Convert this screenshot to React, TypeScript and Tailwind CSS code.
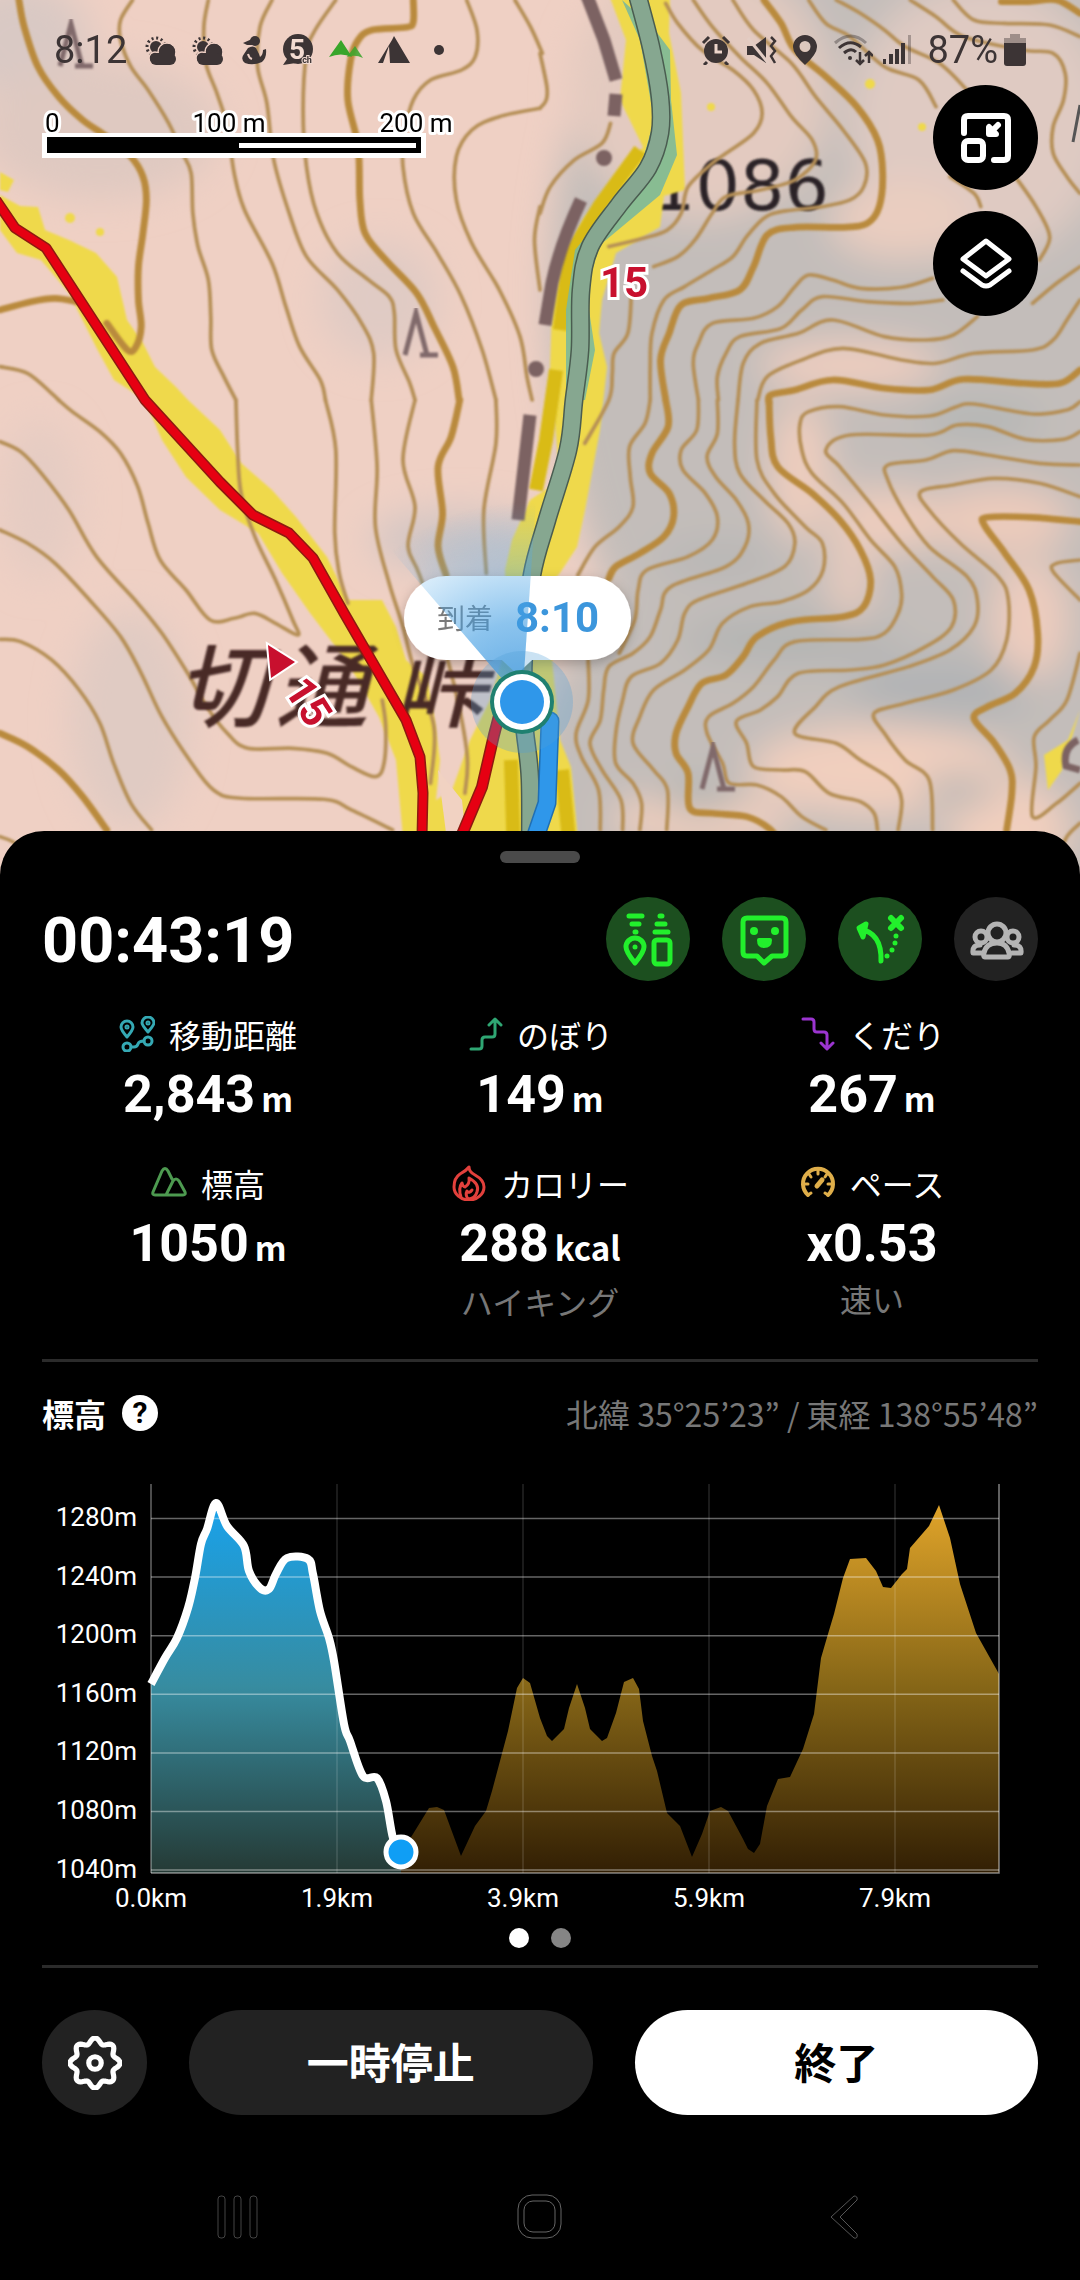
import React from "react";

type Point = [number, number];
type Contour = { d: string; major?: boolean };

const JP = "font-['Noto_Sans_CJK_JP',sans-serif]";
const NUM = "font-[Roboto,'Noto_Sans_CJK_JP',sans-serif]";

// "x,y x,y ..." -> list of points
const parse = (s: string): Point[] => s.split(" ").map((p) => p.split(",").map(Number) as Point);

// Catmull-Rom spline through the points
function smooth(s: string) {
    const p = parse(s);
    let d = `M${p[0][0]} ${p[0][1]}`;
    for (let i = 0; i < p.length - 1; i++) {
        const a = p[Math.max(i - 1, 0)];
        const b = p[i];
        const c = p[i + 1];
        const e = p[Math.min(i + 2, p.length - 1)];
        d += ` C${b[0] + (c[0] - a[0]) / 6} ${b[1] + (c[1] - a[1]) / 6} ${c[0] - (e[0] - b[0]) / 6} ${c[1] - (e[1] - b[1]) / 6} ${c[0]} ${c[1]}`;
    }
    return d;
}

// Contour lines, one group per map tile
const TILES: { x: number; y: number; contours: Contour[] }[] = [
    {
        x: 0,
        y: 0,
        contours: [
            { major: true, d: "55,0 70,80 110,200 170,290 240,360 310,410 380,470 415,530 425,600 415,700 402,800 402,900 410,980 395,1040 370,1050 310,970" },
            { d: "385,0 350,60 350,120 380,200 430,270 490,370 530,460 555,520 560,640 575,740 605,840 612,950 615,1050 650,1130 685,1200" },
            { d: "605,0 592,80 598,190 630,280 660,380 680,520 710,630 790,790 830,920 870,1040 930,1140 945,1200" },
            { d: "790,0 755,80 748,200 775,310 795,480 840,640 890,770 980,870 1050,970 1085,1060 1078,1200" },
            { d: "975,0 915,90 890,160 880,330 890,500 920,640 980,760 1070,840 1130,890 1145,940 1150,1050 1190,1150 1205,1200" },
            { major: true, d: "1200,0 1200,65 1180,82 1080,90 1040,120 1018,180 1010,300 1040,440 1045,600 1060,700 1120,780 1210,880 1260,980 1315,1100 1333,1200" },
            { d: "1355,0 1385,90 1380,170 1340,210 1250,240 1200,300 1175,400 1170,500 1200,640 1270,760 1340,890 1400,1050 1440,1200" },
            { d: "1495,0 1540,80 1575,160" },
            { d: "1568,325 1450,350 1370,390 1325,470 1325,600 1370,730 1450,870 1510,1010 1530,1130 1545,1200" },
            { d: "1568,620 1552,720 1568,870" },
            { major: true, d: "0,930 90,905 160,895 220,905" },
            { d: "0,1100 80,1120 150,1180 170,1200" },
        ],
    },
    {
        x: 540,
        y: 0,
        contours: [
            { d: "0,160 20,260 18,300 0,325" },
            { d: "0,640 30,560 100,480 180,430 205,370" },
            { d: "365,10 400,70 470,150 560,210 620,270 645,340 620,400 540,460 500,490 430,560 410,640 370,690 300,715 200,740" },
            { d: "445,0 500,80 580,170 660,250 730,350 790,420 800,480 740,540 640,570 540,590 500,640 450,720 400,770 330,800" },
            { d: "560,0 620,90 730,190 800,290 880,390 945,490 940,560 900,600 820,620 700,635 650,655 600,710 560,770 500,810 420,860 360,900 325,1000 320,1100 320,1200" },
            { major: true, d: "650,0 700,70 740,150 830,230 920,320 980,420 995,520 985,620 950,670 880,682 740,682 660,705 620,800 580,870 490,895 410,915 375,1000 350,1080 365,1200" },
            { d: "780,0 830,70 900,110 1000,200 1100,240 1150,320" },
            { d: "860,0 930,40 1000,90 1060,140 1160,190 1240,270" },
            { d: "1075,0 1150,50 1230,110 1400,150 1490,160 1525,220 1520,300 1490,380 1490,460 1530,530 1568,580" },
            { d: "1200,0 1260,60 1350,70 1480,75 1568,110" },
            { major: true, d: "1340,5 1420,5 1500,0 1568,40" },
            { d: "1380,530 1440,620 1480,710 1450,780" },
            { d: "1190,530 1260,580 1280,620" },
            { d: "1140,835 1050,862 930,865 850,840 780,825 740,860 690,920 620,955 500,970 460,1030 445,1090 460,1200" },
            { d: "1170,900 1080,910 950,905 820,890 760,930 700,985 580,1010 540,1060 515,1130 518,1200" },
            { d: "1270,950 1200,1005 1120,1020 1000,1010 850,960 750,1000 640,1030 590,1090 575,1200" },
            { d: "1568,900 1530,960 1490,1020 1430,1050 1260,1060 1150,1090 1050,1080 880,1045 760,1080 660,1130 632,1200" },
            { d: "1568,800 1500,850 1430,910" },
            { major: true, d: "1568,1110 1510,1150 1400,1150 1230,1138 1130,1170 1000,1165 850,1140 740,1170 670,1185 665,1210" },
            { d: "265,890 255,1000 215,1060 210,1120 200,1200 130,1330" },
        ],
    },
    {
        x: 0,
        y: 400,
        contours: [
            { d: "170,0 210,35 290,95 350,160 400,260 430,370 465,480 540,570 610,660 680,655 740,640 800,670 865,705 850,660 800,540 740,410 700,280 690,150 685,0" },
            { d: "0,125 60,155 120,220 200,330 280,470 400,610 470,700 545,820 600,920 660,1000 720,1045 850,1045 950,1060 1020,1100 1090,1130 1115,1090 1120,980 1110,900" },
            { d: "0,390 80,430 160,490 260,600 350,710 410,820 470,950 550,1080 620,1170 700,1195 940,1198 1020,1230 1140,1290" },
            { d: "0,718 60,725 150,780 230,870 290,970 330,1090 380,1210 440,1290" },
            { major: true, d: "0,1000 80,1040 170,1110 240,1190 310,1290" },
            { d: "0,1310 50,1335 80,1400" },
            { d: "945,0 975,150 972,400 985,520 1010,610" },
            { d: "1078,0 1095,200 1090,380 1130,550 1170,680 1200,800 1260,980 1250,1150" },
            { d: "1205,0 1170,180 1205,320 1185,440 1220,530 1300,780 1355,1050 1350,1180" },
            { major: true, d: "1335,0 1310,110 1272,200 1285,340 1272,440 1295,525" },
            { d: "1440,0 1440,130 1405,330 1412,520" },
        ],
    },
    {
        x: 540,
        y: 400,
        contours: [
            { d: "320,0 305,70 260,140 262,230 270,320 230,380 160,440 110,525" },
            { major: true, d: "365,0 372,80 325,160 320,220 375,280 388,350 360,410 290,460 220,500 200,535" },
            { d: "460,0 455,90 410,150 415,210 480,280 515,350 500,420 430,470 310,510 285,570 275,660 230,760" },
            { d: "515,0 515,100 485,170 510,230 570,300 605,370 595,440 540,500 380,560 350,630 320,710 270,760 200,800 185,870 175,960 145,1030 180,1110 235,1200 240,1290" },
            { d: "575,0 565,130 580,220 650,300 720,370 740,430 710,500 600,550 460,600 420,640 400,720 350,790 265,830 240,900 220,1000 220,1090 270,1150 295,1210 290,1290" },
            { d: "630,0 630,180 680,280 770,380 820,430 822,510 780,570 700,605 610,620 530,670 490,750 420,810 330,870 290,950 270,1030 330,1110 370,1170 368,1290" },
            { major: true, d: "665,0 670,110 690,200 790,280 870,360 930,450 960,540 940,620 880,650 730,665 630,710 590,770 540,825 470,850 430,920 395,1000 395,1060 430,1120 435,1225 500,1240 600,1250 665,1285 700,1330" },
            { d: "1568,5 1530,30 1430,42 1260,12 1210,20 1130,48 1000,45 870,20 780,35 755,70 760,150 790,220 880,310 960,420 1030,500 1050,580 1040,640 1000,700 930,718 740,725 680,780 620,860 560,910 490,950 485,1000 530,1090 550,1150 630,1155 700,1190 760,1250 830,1290" },
            { d: "1568,95 1520,118 1410,118 1300,80 1210,75 1130,105 900,105 830,150 870,200 950,300 1050,430 1140,530 1200,600 1195,680 1120,740 1000,795 900,810 750,820 690,890 640,930 570,965 600,1030 620,1100 700,1110 770,1115 840,1180 930,1205 970,1240 980,1290" },
            { d: "1568,195 1450,190 1300,165 1200,152 1120,180 1010,195 1010,240 1060,340 1130,440 1240,530 1270,600 1260,680 1190,750 1070,800 870,860 800,920 740,1000 860,1030 930,1080 1020,1140 1050,1200 1040,1290" },
            { d: "1568,290 1450,250 1320,235 1200,255 1105,275 1130,330 1220,430 1330,530 1360,600 1355,720 1310,810 1200,870 1060,910 970,940 1000,1000 1060,1080 1130,1140 1140,1290" },
            { major: true, d: "1568,365 1430,352 1300,352 1290,375 1350,460 1420,570 1445,700 1435,800 1380,880 1300,920 1260,955 1320,1030 1365,1110 1370,1180 1355,1290" },
            { d: "1568,480 1500,490 1490,515 1568,600" },
            { d: "1568,760 1530,900 1480,960 1435,1010 1440,1100 1430,1250 1500,1210 1568,1150" },
            { d: "1568,1270 1530,1310 1500,1380" },
            { d: "140,780 140,900 105,1000 120,1070 170,1170 175,1290" },
        ],
    },
];

// Light and dark patches of the hill shading: cx, cy, rx, ry, colour
const SHADES: [number, number, number, number, string][] = [
    [950, 300, 400, 560, "#c3bdba"],
    [830, 800, 300, 300, "#c3bdba"],
    [700, 90, 130, 130, "#e3cac0"],
    [980, 120, 130, 140, "#dfcac2"],
    [900, 220, 70, 40, "#eacdc0"],
    [850, 365, 90, 24, "#efcebf"],
    [800, 470, 30, 70, "#eecdbd"],
    [890, 520, 60, 30, "#efcdbd"],
    [850, 560, 20, 80, "#e8cbbd"],
    [1000, 520, 70, 35, "#eccbbb"],
    [1030, 620, 40, 60, "#edccbd"],
    [880, 770, 130, 45, "#f1cfbe"],
    [700, 820, 90, 26, "#f1cfbe"],
    [1010, 830, 60, 50, "#f1cfbe"],
    [790, 640, 110, 24, "#b3b4b3"],
    [940, 690, 90, 34, "#b2b4b5"],
    [720, 560, 60, 18, "#b7b6b5"],
    [980, 420, 60, 14, "#aeb3b2"],
    [700, 800, 40, 12, "#aab0ae"],
    [960, 790, 40, 14, "#b2b4b3"],
    [20, 40, 70, 60, "#d9c9c4"],
    [100, 130, 120, 70, "#dfc9c1"],
    [380, 300, 60, 60, "#e0cbc4"],
    [130, 720, 60, 110, "#e0cbc3"],
    [460, 540, 90, 30, "#d2c6c4"],
    [40, 500, 40, 80, "#e5ccc3"],
];

const ROUTE = "636,-10 651,47 660,97 660,133 648,168 619,205 590,247 581,290 580,350 574,400 568,450 547,520 532,575 524,650 524,720 530,780 530,880";
const RED_PATH = "M-4 200 L15 228 L46 248 L145 400 L220 482 L253 515 L289 533 L313 558 L344 613 L406 720 L420 757 L423 793 L421 880";

function TreeMark({ x, y }: { x: number; y: number }) {
    return (
        <path
            transform={`translate(${x} ${y})`}
            d="M2 44 L13 2 L24 44 M17 44 H35"
            fill="none"
            stroke="#80696a"
            strokeWidth="5"
            filter="url(#soft)"
        />
    );
}

function TrailMap() {
    return (
        <svg viewBox="0 0 1080 880" preserveAspectRatio="xMidYMin slice" className="block h-full w-full" aria-label="登山地図">
            <defs>
                <filter id="shade" x="-50%" y="-50%" width="200%" height="200%">
                    <feGaussianBlur stdDeviation="18" />
                </filter>
                <filter id="soft">
                    <feGaussianBlur stdDeviation="1" />
                </filter>
                <filter id="pillShadow" x="-20%" y="-30%" width="140%" height="180%">
                    <feDropShadow dx="0" dy="4" stdDeviation="6" floodOpacity="0.25" />
                </filter>
                <radialGradient id="beam" gradientUnits="userSpaceOnUse" cx="522" cy="702" r="200">
                    <stop offset="0" stopColor="#2f8fdc" stopOpacity="0.8" />
                    <stop offset="0.4" stopColor="#3f9ce2" stopOpacity="0.6" />
                    <stop offset="0.75" stopColor="#5aaeea" stopOpacity="0.26" />
                    <stop offset="1" stopColor="#5aaeea" stopOpacity="0" />
                </radialGradient>
            </defs>

            <rect width="1080" height="880" fill="#efd0c4" />
            <g filter="url(#shade)">
                {SHADES.map(([cx, cy, rx, ry, fill], i) => (
                    <ellipse key={i} cx={cx} cy={cy} rx={rx} ry={ry} fill={fill} />
                ))}
            </g>

            {/* Place names */}
            <g filter="url(#soft)" fill="#2a2426">
                <text x="829" y="210" fontSize="70" textAnchor="end" fontFamily="DejaVu Sans, sans-serif">1086</text>
            </g>

            {/* Highlight along the trails */}
            <g fill="#efd94c" filter="url(#soft)">
                <path d="M0 172 L14 180 L8 192 L0 190 Z" />
                <path d="M0 195 L20 206 L38 207 L45 230 L69 240 L96 253 L117 277 L127 320 L143 343 L155 367 L176 387 L188 400 L220 430 L241 463 L272 490 L296 517 L327 557 L348 600 L382 600 L396 627 L406 660 L427 677 L434 717 L440 760 L436 800 L452 790 L470 740 L490 700 L508 640 L505 570 L512 540 L530 500 L560 480 L550 370 L552 310 L562 262 L585 217 L609 193 L643 147 L620 100 L626 40 L609 -5 L670 -5 L669 33 L681 93 L685 190 L664 196 L660 227 L616 253 L602 300 L599 333 L607 367 L600 430 L585 510 L577 547 L560 573 L545 590 L560 740 L571 767 L580 860 L405 860 L396 760 L379 717 L348 663 L310 613 L282 573 L258 533 L220 510 L186 477 L162 440 L145 400 L114 380 L96 347 L69 293 L41 260 L17 253 L0 230 Z" />
                <path d="M1080 710 L1062 770 L1048 790 L1044 755 L1068 740 Z" />
                <circle cx="100" cy="232" r="4" />
                <circle cx="70" cy="218" r="5" />
                <circle cx="870" cy="84" r="5" />
                <circle cx="922" cy="127" r="4" />
                <circle cx="711" cy="107" r="4" />
            </g>
            <path d="M438 770 L452 880 L470 880 L462 800 Z" fill="#f1d2c2" />
            <g fill="none" stroke="#d9bb16" strokeWidth="14" filter="url(#soft)">
                <path d="M640 150 L600 205 L570 255 L560 330" />
                <path d="M556 370 L546 440 L536 490" />
                <path d="M511 760 L514 860 M562 770 L570 850" />
            </g>

            {/* Contour lines */}
            <g fill="none" strokeLinecap="round" filter="url(#soft)">
                {TILES.map((tile) => (
                    <g key={`${tile.x}-${tile.y}`} transform={`translate(${tile.x} ${tile.y}) scale(0.3444 0.3333)`}>
                        {tile.contours.map((c) => (
                            <path
                                key={c.d}
                                d={smooth(c.d)}
                                stroke={c.major ? "#b98a3c" : "#b58f56"}
                                strokeWidth={c.major ? 20 : 11}
                            />
                        ))}
                    </g>
                ))}
            </g>

            {/* Prefecture border */}
            <g fill="none" stroke="#7b6262" strokeWidth="13" filter="url(#soft)">
                <path d="M587 -4 L604 40 L616 80 M616 94 L614 116 M581 200 Q560 245 552 283 L545 325 M530 415 L518 520" />
                <path d="M1078 740 Q1062 748 1066 766 L1080 770" strokeWidth="7" />
                <circle cx="604" cy="158" r="8" fill="#7b6262" stroke="none" />
                <circle cx="536" cy="369" r="8" fill="#7b6262" stroke="none" />
            </g>
            <TreeMark x={403} y={311} />
            <TreeMark x={58} y={22} />
            <TreeMark x={700} y={745} />
            <path d="M1080 105 L1073 142" stroke="#555" strokeWidth="3" />

            <g filter="url(#soft)" fill="#4a2c28" fontFamily="Noto Sans CJK JP, sans-serif" fontStyle="italic" fontWeight="500" fontSize="92">
                <text x="176" y="720">切</text>
                <text x="276" y="720">通</text>
                <text x="394" y="720">峠</text>
            </g>

            {/* Trails */}
            <path d={RED_PATH} fill="none" stroke="#8d1a10" strokeWidth="11" strokeLinejoin="round" />
            <path d={RED_PATH} fill="none" stroke="#e60012" strokeWidth="8" strokeLinejoin="round" />
            <path d="M500 712 L494 735 L482 787 L463 832 L440 880" fill="none" stroke="#8d1a10" strokeWidth="12" />
            <path d="M500 712 L494 735 L482 787 L463 832 L440 880" fill="none" stroke="#e60012" strokeWidth="9" />

            <path d="M622 0 L655 30 L670 50 L671 100 L677 155 L660 195 L600 245 L586 290 L595 350 L585 400 L566 400 L566 310 L575 250 L640 170 L654 120 L640 40 Z" fill="#7cb89a" opacity="0.9" />
            <path d={smooth(ROUTE)} fill="none" stroke="#4a5c50" strokeWidth="19" />
            <path d={smooth(ROUTE)} fill="none" stroke="#86a790" strokeWidth="16" />
            <path d="M550 721 L547 803 L524 870" fill="none" stroke="#1f6fb4" strokeWidth="19" strokeLinecap="round" strokeLinejoin="round" />
            <path d="M550 721 L547 803 L524 870" fill="none" stroke="#2f97ea" strokeWidth="16" strokeLinecap="round" strokeLinejoin="round" />

            <g fill="#c8102e" stroke="#fff" strokeWidth="6" paintOrder="stroke" fontFamily="Roboto, sans-serif" fontWeight="700" fontSize="42">
                <text x="600" y="297">15</text>
                <text x="308" y="716" textAnchor="middle" transform="rotate(57 308 702)">15</text>
                <path d="M268 645 L295 662 L271 678 Z" strokeWidth="4" />
            </g>

            {/* Arrival bubble */}
            <g filter="url(#pillShadow)">
                <rect x="404" y="576" width="227" height="84" rx="42" fill="#fff" />
                <path d="M502 660 L517 674 L532 660 Z" fill="#fff" />
            </g>
            <text x="437" y="629" fontSize="28" fill="#7a7a7a" fontFamily="Noto Sans CJK JP, sans-serif">到着</text>
            <text x="515" y="632" fontSize="42" fontWeight="700" fill="#3c96dc" fontFamily="Roboto, sans-serif">8:10</text>

            {/* Current position and heading */}
            <path d="M522 702 L374 530 Q450 470 536 500 Z" fill="url(#beam)" />
            <circle cx="522" cy="702" r="51" fill="#4f9fd6" opacity="0.3" />
            <circle cx="522" cy="702" r="32" fill="#1f8070" />
            <circle cx="522" cy="702" r="28" fill="#fff" />
            <circle cx="522" cy="702" r="22" fill="#2f97ea" />
        </svg>
    );
}

function WeatherIcon() {
    return (
        <svg viewBox="0 0 32 30" className="h-[30px] w-8" fill="#3c3435">
            <circle cx="11" cy="12" r="9" fill="none" stroke="#3c3435" strokeWidth="3" strokeDasharray="2 2.7" />
            <circle cx="11" cy="12" r="6" />
            <g stroke="#edcfc4" strokeWidth="1.5">
                <circle cx="22" cy="17" r="9" />
                <circle cx="10" cy="23" r="6" />
            </g>
            <circle cx="22" cy="17" r="8" />
            <rect x="5" y="18" width="26" height="12" rx="6" />
        </svg>
    );
}

function StatusBar() {
    return (
        <div className={`flex h-[100px] items-center justify-between px-[54px] text-[38px] leading-none text-[#3c3435] ${NUM}`}>
            <div className="flex items-center gap-[15px]">
                <span className="mr-[3px]">8:12</span>
                <WeatherIcon />
                <WeatherIcon />
                <svg viewBox="0 0 28 30" className="h-[30px] w-7" fill="#3c3435">
                    <circle cx="16" cy="6" r="5" />
                    <path d="M4 8 L13 4 L15 10 L8 10 Z" />
                    <path d="M9 13 Q14 10 17 13 L20 19 L21 22 Q24 20 24 15 L27 14 Q28 23 23 27 Q14 31 6 28 Q1 24 5 19 Z" />
                    <path d="M9 19 Q10 23 13 24" stroke="#edcfc4" strokeWidth="2" fill="none" />
                </svg>
                <svg viewBox="0 0 32 32" className="h-8 w-8">
                    <circle cx="16" cy="15" r="15" fill="#3c3435" />
                    <path d="M1 31 L7 22 L14 29 Z" fill="#3c3435" />
                    <text x="15" y="25" textAnchor="middle" fontSize="28" fontWeight="700" fill="#f3dcd2">5</text>
                    <text x="25" y="29" textAnchor="middle" fontSize="9" fontWeight="700" fill="#3c3435" stroke="#f3dcd2" strokeWidth="2" paintOrder="stroke">ch</text>
                </svg>
                <svg viewBox="0 0 34 20" className="h-5 w-[34px]" fill="#38a52a">
                    <path d="M18 17 L26 6 L34 18 Q26 14 18 17 Z" opacity="0.85" />
                    <path d="M0 17 L12 0 L23 17 Q12 12 0 17 Z" />
                </svg>
                <svg viewBox="0 0 32 28" className="h-7 w-8" fill="#3c3435">
                    <path d="M14 4 L16 0 L32 27 H12 L11 10 L5 27 H0 Z" />
                </svg>
                <span className="ml-[9px] h-[10px] w-[10px] rounded-full bg-[#3c3435]" />
            </div>
            <div className="flex items-center">
                <svg viewBox="0 0 30 30" className="mr-4 h-[30px] w-[30px]">
                    <circle cx="15" cy="16" r="12" fill="#3c3435" />
                    <path d="M2 8 L8 2 M28 8 L22 2 M6 27 L3 30 M24 27 L27 30" stroke="#3c3435" strokeWidth="3" />
                    <path d="M15 9 V17 H21" stroke="#edd5cb" strokeWidth="3" fill="none" />
                </svg>
                <svg viewBox="0 0 30 30" className="mr-4 h-[30px] w-[30px]" fill="none" stroke="#3c3435">
                    <path d="M0 11 H7 L19 2 V28 L7 20 H0 Z" fill="#3c3435" stroke="none" />
                    <path d="M1 3 L22 29" stroke="#e3cdc4" strokeWidth="3" />
                    <path d="M24 2 L28 6 L24 11 L28 16 L24 21 L28 28" strokeWidth="2.5" />
                </svg>
                <svg viewBox="0 0 24 30" className="mr-4 h-[30px] w-6">
                    <path d="M12 0 A12 12 0 0 1 24 12 Q24 19 12 30 Q0 19 0 12 A12 12 0 0 1 12 0 Z M12 6 A5 5 0 1 0 12 17 A5 5 0 1 0 12 6 Z" fill="#3c3435" fillRule="evenodd" />
                </svg>
                <svg viewBox="0 0 40 32" className="mr-[10px] h-8 w-10" fill="none" stroke="#3c3435" strokeWidth="3">
                    <path d="M2 9 Q18 -5 33 9" opacity="0.4" />
                    <path d="M6 14 Q17 4 28 13" />
                    <path d="M11 19 Q18 13 23 18" />
                    <circle cx="17" cy="24" r="2" fill="#3c3435" stroke="none" />
                    <path d="M27 18 V30 M23 26 L27 30 L31 26 M36 29 V18 M32 22 L36 18 L40 22" strokeWidth="2.5" />
                </svg>
                <svg viewBox="0 0 28 30" className="mr-4 h-[30px] w-7" fill="#3c3435">
                    <path d="M0 24 h3 v5 h-3 Z M6 19 h4 v10 h-4 Z M12 14 h4 v15 h-4 Z M18 8 h4 v21 h-4 Z" />
                    <path d="M25 0 h3 v29 h-3 Z" opacity="0.35" />
                </svg>
                <span className="mr-[6px]">87%</span>
                <svg viewBox="0 0 22 32" className="h-8 w-[22px]" fill="#3c3435">
                    <path d="M6 0 H16 V4 H22 V10 H0 V4 H6 Z" opacity="0.4" />
                    <path d="M0 9 H22 V29 Q22 32 19 32 H3 Q0 32 0 29 Z" />
                </svg>
            </div>
        </div>
    );
}

function ScaleBar() {
    return (
        <svg viewBox="0 0 420 52" className="ml-[38px] mt-[8px] block h-[52px] w-[420px]">
            <rect x="4" y="25" width="384" height="25" fill="#fff" />
            <rect x="9" y="29" width="374" height="16" fill="#000" />
            <rect x="201" y="35" width="177" height="5" fill="#fff" />
            <g fontFamily="Roboto, sans-serif" fontSize="26" stroke="#fff" strokeWidth="6" strokeLinejoin="round" paintOrder="stroke">
                <text x="7" y="24">0</text>
                <text x="191" y="24" textAnchor="middle">100 m</text>
                <text x="378" y="24" textAnchor="middle">200 m</text>
            </g>
        </svg>
    );
}

function MapButton({ label, children }: { label: string; children: React.ReactNode }) {
    return (
        <button aria-label={label} className="flex h-[105px] w-[105px] items-center justify-center rounded-full bg-black">
            <svg viewBox="0 0 52 52" className="h-[52px] w-[52px]" fill="none" stroke="#fff" strokeWidth="6" strokeLinejoin="round" strokeLinecap="round">
                {children}
            </svg>
        </button>
    );
}

function ToggleButton({ label, off, children }: { label: string; off?: boolean; children: React.ReactNode }) {
    return (
        <button aria-label={label} className={`h-[84px] w-[84px] rounded-full ${off ? "bg-[#222222] text-[#b4b4b4]" : "bg-[#1c4f1f] text-[#22f02c]"}`}>
            <svg viewBox="0 0 84 84" className="h-full w-full" fill="none" stroke="currentColor" strokeWidth="5" strokeLinecap="round" strokeLinejoin="round">
                {children}
            </svg>
        </button>
    );
}

const STATS = [
    {
        label: "移動距離",
        value: "2,843",
        unit: "m",
        color: "text-[#35a9b4]",
        icon: (
            <>
                <path d="M8 21 Q2 14 2 11 A6 6 0 0 1 14 11 Q14 14 8 21 Z" />
                <path d="M29 16 Q23 9 23 7 A6 6 0 0 1 35 7 Q35 9 29 16 Z" />
                <circle cx="8" cy="11" r="1" />
                <circle cx="29" cy="7" r="1" />
                <circle cx="8" cy="31" r="4" />
                <circle cx="29" cy="25" r="4" />
                <path d="M12 31 H15 Q18 31 19 28 Q20 25 25 25" />
            </>
        ),
    },
    {
        label: "のぼり",
        value: "149",
        unit: "m",
        color: "text-[#2fa673]",
        icon: <path d="M4 33 H12 Q15 33 15 30 V24 Q15 21 18 21 H25 Q28 21 28 18 V4 M22 9 L28 3 L34 9" />,
    },
    {
        label: "くだり",
        value: "267",
        unit: "m",
        color: "text-[#9b35d0]",
        icon: <path d="M4 3 H12 Q15 3 15 6 V13 Q15 16 18 16 H25 Q28 16 28 19 V32 M22 27 L28 33 L34 27" />,
    },
    {
        label: "標高",
        value: "1050",
        unit: "m",
        color: "text-[#4d9a50]",
        icon: <path d="M15 30 H4 Q1 30 2 27 L11 6 Q14 1 17 6 L21 14 M15 30 L22 16 Q25 12 28 16 L34 27 Q35 30 32 30 Z" />,
    },
    {
        label: "カロリー",
        value: "288",
        unit: "kcal",
        note: "ハイキング",
        color: "text-[#e2403c]",
        icon: (
            <>
                <path d="M18 2 Q18 7 24 10 Q33 15 33 22 A15 13 0 0 1 3 22 Q3 13 9 9 Q15 6 18 2 Z" />
                <path d="M10 32 Q7 23 11 18 Q12 22 14 22 Q19 19 18 13 Q29 19 26 27 Q24 34 17 34 Q14 30 16 26 Q18 29 21 25" />
            </>
        ),
    },
    {
        label: "ペース",
        value: "x0.53",
        note: "速い",
        color: "text-[#dfae4a]",
        icon: (
            <>
                <path d="M8 30 A15 15 0 1 1 28 30" strokeWidth="4" />
                <path d="M18 6 V9 M9 9 L11 12 M27 9 L25 12 M5 19 H8 M31 19 H28 M8 30 L11 28 M28 30 L25 28" />
                <path d="M17 21 L22 15" strokeWidth="5" />
            </>
        ),
    },
];

const WALKED = "151,1683 165,1657 177,1637 188,1607 195,1577 201,1543 207,1528 216,1502 227,1525 244,1545 249,1570 260,1587 269,1588 276,1573 287,1557 308,1558 313,1573 320,1610 329,1637 334,1660 344,1723 350,1740 363,1775 377,1777 386,1800 393,1837 401,1852";
const AHEAD = "401,1852 413,1833 429,1807 437,1806 444,1809 451,1828 461,1855 475,1825 486,1810 492,1790 508,1730 517,1687 523,1677 530,1682 540,1717 547,1735 552,1740 564,1728 569,1707 577,1683 585,1707 590,1728 602,1740 607,1737 616,1712 624,1681 633,1677 639,1688 643,1720 652,1755 657,1770 667,1812 680,1825 692,1856 702,1833 710,1810 721,1806 728,1810 743,1838 748,1848 754,1852 760,1843 767,1805 778,1778 790,1776 803,1748 814,1713 821,1657 828,1633 834,1613 843,1577 850,1558 866,1557 876,1570 883,1586 891,1587 902,1573 907,1568 910,1547 929,1525 939,1504 950,1537 960,1583 976,1632 999,1673";
const Y_TICKS = [1280, 1240, 1200, 1160, 1120, 1080, 1040];
const X_TICKS = ["0.0km", "1.9km", "3.9km", "5.9km", "7.9km"];

function ElevationChart() {
    return (
        <svg viewBox="42 1470 996 447" className="mt-[35px] block w-full" role="img" aria-label="標高グラフ">
            <defs>
                <linearGradient id="walked" gradientUnits="userSpaceOnUse" x1="0" y1="1500" x2="0" y2="1872">
                    <stop offset="0" stopColor="#18a2ec" />
                    <stop offset="0.5" stopColor="#378ca0" />
                    <stop offset="1" stopColor="#253a35" />
                </linearGradient>
                <linearGradient id="ahead" gradientUnits="userSpaceOnUse" x1="0" y1="1500" x2="0" y2="1872">
                    <stop offset="0" stopColor="#e2a52a" />
                    <stop offset="0.5" stopColor="#866617" />
                    <stop offset="1" stopColor="#321f04" />
                </linearGradient>
            </defs>
            <path d={`M151 1872 L${WALKED} L401 1872 Z`} fill="url(#walked)" />
            <path d={`M401 1872 L${AHEAD} L999 1872 Z`} fill="url(#ahead)" />

            {Y_TICKS.map((t, i) => (
                <line key={t} x1="151" x2="999" y1={1517.5 + i * 58.6} y2={1517.5 + i * 58.6} stroke="#fff" strokeOpacity="0.4" strokeWidth="1.5" />
            ))}
            {X_TICKS.map((t, i) => (
                <line key={t} x1={151 + i * 186} x2={151 + i * 186} y1="1483" y2="1872" stroke="#fff" strokeOpacity={i === 0 ? 0.4 : 0.14} strokeWidth="1.5" />
            ))}
            <path d="M151 1872 H999 V1483" fill="none" stroke="#fff" strokeOpacity="0.5" strokeWidth="1.5" />

            <path d={smooth(WALKED)} fill="none" stroke="#fff" strokeWidth="8" strokeLinejoin="round" />
            <circle cx="401" cy="1851" r="15" fill="#0f9ef5" stroke="#fff" strokeWidth="5" />

            <g fill="#fff" fontFamily="Roboto, sans-serif" fontSize="26">
                {Y_TICKS.map((t, i) => (
                    <text key={t} x="137" y={1525 + i * 58.6} textAnchor="end">{t}m</text>
                ))}
                {X_TICKS.map((t, i) => (
                    <text key={t} x={151 + i * 186} y="1906" textAnchor="middle">{t}</text>
                ))}
            </g>
        </svg>
    );
}

// Eight-lobed gear outline
const GEAR = Array.from({ length: 96 }, (_, i) => {
    const a = (i / 96) * Math.PI * 2 - Math.PI / 2;
    const r = 21.5 + 2.6 * Math.cos(8 * (a + Math.PI / 2));
    return `${(26 + r * Math.cos(a)).toFixed(1)},${(26 + r * Math.sin(a)).toFixed(1)}`;
}).join(" ");

export default function App() {
    return (
        <div className={`flex min-h-screen flex-col bg-black text-white ${JP}`}>
            <div className="relative aspect-[1080/880] overflow-hidden">
                <TrailMap />
                <div className="absolute inset-x-0 top-0">
                    <StatusBar />
                    <ScaleBar />
                </div>
                <div className="absolute right-[42px] top-[85px] flex flex-col gap-[21px]">
                    <MapButton label="地図を縮小">
                        <path d="M4 21 V8 Q4 4 8 4 H44 Q48 4 48 8 V44 Q48 48 44 48 H34" />
                        <rect x="4" y="29" width="19" height="19" rx="4" />
                        <path d="M29 15 V22 H36 Z" fill="#fff" />
                        <path d="M30 21 L38 13" />
                    </MapButton>
                    <MapButton label="レイヤー">
                        <path d="M26 3 L49 21 L26 38 L3 21 Z" strokeWidth="5" />
                        <path d="M3 33 L22 47 Q26 49 30 47 L49 33" strokeWidth="5" />
                    </MapButton>
                </div>
            </div>

            {/* Activity sheet */}
            <div className="relative -mt-[49px] flex flex-col rounded-t-[44px] bg-black px-[42px] pt-5">
                <div className="h-3 w-20 self-center rounded-full bg-[#4a4a4a]" />

                <div className="mt-[34px] flex items-center justify-between">
                    <span className={`pt-1 text-[63px] font-bold leading-[80px] ${NUM}`}>00:43:19</span>
                    <div className="flex gap-8">
                        <ToggleButton label="地点とスマホの通知">
                            <path d="M23 19 H36 M26 27 H33 M29 35 H30 M54 19 H56 M51 27 H59 M49 35 H62" />
                            <path d="M29 66 Q20 55 20 50 A9 9 0 0 1 38 50 Q38 55 29 66 Z" />
                            <circle cx="29" cy="50" r="2.5" fill="currentColor" stroke="none" />
                            <rect x="48" y="43" width="16" height="24" rx="3" />
                        </ToggleButton>
                        <ToggleButton label="フィールドメモ">
                            <path d="M25 21 H60 Q64 21 64 25 V55 Q64 59 60 59 H50 L42 66 L35 59 H25 Q21 59 21 55 V25 Q21 21 25 21 Z" />
                            <circle cx="32" cy="34" r="4" fill="currentColor" stroke="none" />
                            <circle cx="53" cy="34" r="4" fill="currentColor" stroke="none" />
                            <path d="M37 43 H48 Q48 49 42 49 Q37 49 37 43 Z" fill="currentColor" strokeWidth="4" />
                        </ToggleButton>
                        <ToggleButton label="ルート外れ警告">
                            <path d="M43 64 Q44 36 22 32 M28 27 L21 31 L25 40 Z" />
                            <path d="M53 21 L63 31 M63 21 L53 31" strokeWidth="6" />
                            <path d="M58 39 V39 M57 46 V46 M54 53 V53 M49 59 V59" />
                        </ToggleButton>
                        <ToggleButton label="みまもり" off>
                            <circle cx="27" cy="40" r="6" />
                            <circle cx="59" cy="40" r="6" />
                            <path d="M28 56 H19 Q18 48 26 48 M58 56 H67 Q68 48 60 48" />
                            <circle cx="43" cy="36" r="9" fill="#222222" />
                            <path d="M31 60 Q29 60 30 56 Q32 46 43 46 Q53 46 55 56 Q56 60 54 60 Z" fill="#222222" />
                        </ToggleButton>
                    </div>
                </div>

                {/* Stats */}
                <dl className="mt-[30px] grid grid-cols-3 gap-y-[31px] text-center">
                    {STATS.map((s) => (
                        <div key={s.label}>
                            <dt className="flex items-center justify-center gap-[14px] text-[32px] leading-[46px]">
                                <svg viewBox="0 0 36 36" className={`h-9 w-9 ${s.color}`} fill="none" stroke="currentColor" strokeWidth="3" strokeLinecap="round" strokeLinejoin="round">
                                    {s.icon}
                                </svg>
                                {s.label}
                            </dt>
                            <dd className="mt-[7px] flex items-baseline justify-center gap-[6px] leading-[62px]">
                                <span className={`text-[52px] font-bold ${NUM}`}>{s.value}</span>
                                {s.unit && <span className="text-[33px] font-bold">{s.unit}</span>}
                            </dd>
                            {s.note && <dd className="text-[32px] leading-[46px] text-[#777777]">{s.note}</dd>}
                        </div>
                    ))}
                </dl>

                <hr className="mt-[35px] border-t-[3px] border-[#2b2b2b]" />

                {/* Elevation */}
                <div className="mt-7 flex items-center justify-between text-[32px] leading-[46px]">
                    <h2 className="flex items-center gap-4 font-bold">
                        標高
                        <button aria-label="ヘルプ" className={`h-9 w-9 rounded-full bg-white text-center text-[30px] font-bold leading-9 text-black ${NUM}`}>?</button>
                    </h2>
                    <span className="text-[#777777]">北緯 35°25’23” / 東経 138°55’48”</span>
                </div>
                <ElevationChart />
                <div className="mt-[10px] flex justify-center gap-[22px]">
                    <span className="h-5 w-5 rounded-full bg-white" />
                    <span className="h-5 w-5 rounded-full bg-[#858585]" />
                </div>

                <hr className="mt-[17px] border-t-[3px] border-[#2b2b2b]" />

                <div className="mt-[42px] flex gap-[42px] text-[42px] font-bold">
                    <button aria-label="設定" className="flex h-[105px] w-[105px] shrink-0 items-center justify-center rounded-full bg-[#222222]">
                        <svg viewBox="0 0 52 52" className="h-[54px] w-[54px]" fill="none" stroke="#fff" strokeWidth="5" strokeLinejoin="round">
                            <polygon points={GEAR} />
                            <circle cx="26" cy="26" r="6" />
                        </svg>
                    </button>
                    <button className="h-[105px] flex-1 rounded-full bg-[#222222] pb-1">一時停止</button>
                    <button className="h-[105px] flex-1 rounded-full bg-white pb-1 text-black">終了</button>
                </div>
            </div>

            {/* System navigation */}
            <nav className="mt-[70px] flex h-16 items-center justify-around px-[88px]">
                <button aria-label="最近使ったアプリ">
                    <svg viewBox="0 0 44 46" className="h-[46px] w-11" fill="none" stroke="#444" strokeWidth="1">
                        <rect x="2" y="2" width="7" height="42" rx="3" />
                        <rect x="18" y="2" width="7" height="42" rx="3" />
                        <rect x="34" y="2" width="7" height="42" rx="3" />
                    </svg>
                </button>
                <button aria-label="ホーム">
                    <svg viewBox="0 0 46 46" className="h-[46px] w-[46px]" fill="none" stroke="#666" strokeWidth="1">
                        <rect x="1" y="1" width="43" height="43" rx="14" />
                        <rect x="7" y="7" width="31" height="31" rx="9" />
                    </svg>
                </button>
                <button aria-label="戻る">
                    <svg viewBox="0 0 44 46" className="h-[46px] w-11" fill="none" stroke="#555" strokeWidth="1" strokeLinejoin="round">
                        <path d="M34 2 Q38 2 37 6 L20 23 L37 40 Q38 45 34 44 L11 23 Z" />
                    </svg>
                </button>
            </nav>
        </div>
    );
}
